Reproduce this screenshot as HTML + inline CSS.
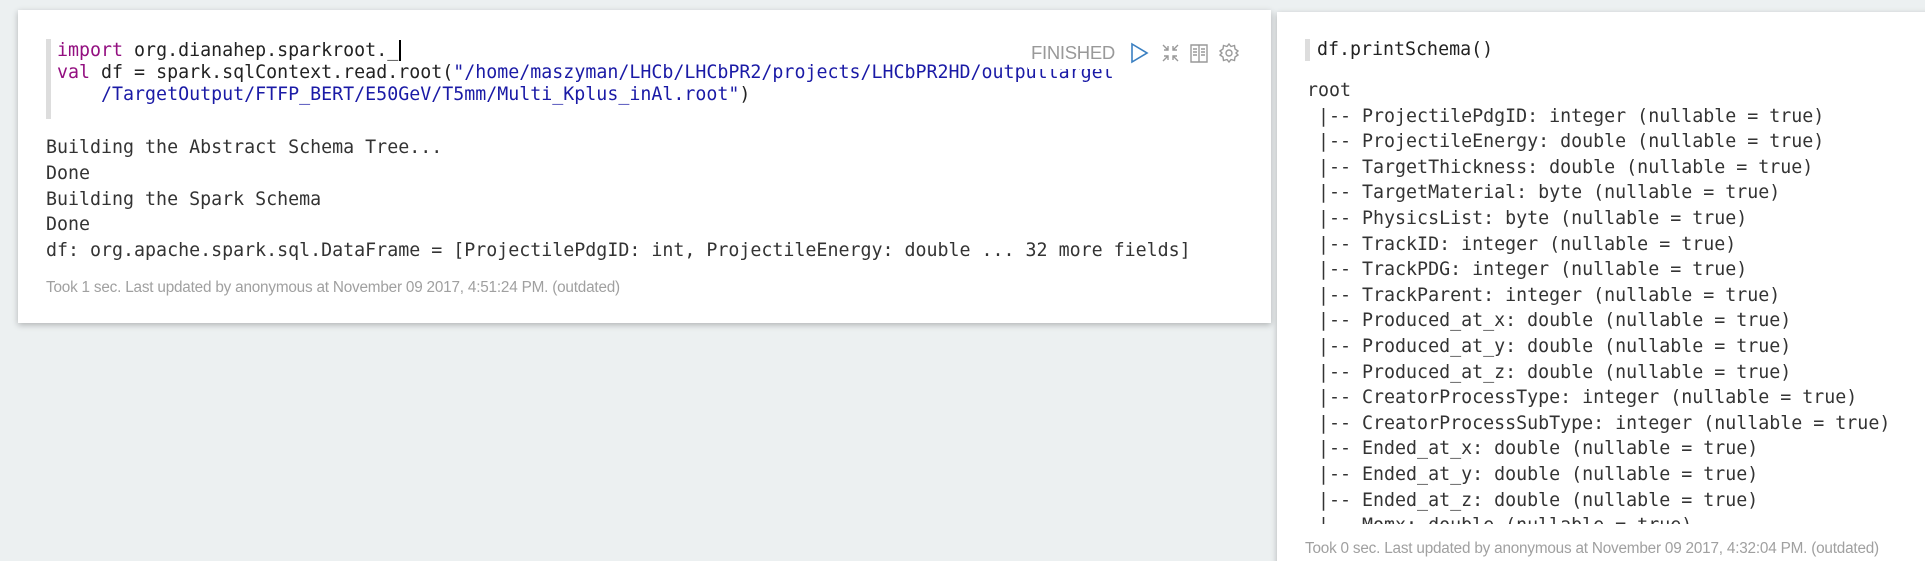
<!DOCTYPE html>
<html><head><meta charset="utf-8"><style>
html,body{margin:0;padding:0;width:1925px;height:561px;overflow:hidden;background:#ecf0f1;position:relative}
.card{position:absolute;background:#fff;box-shadow:0 2px 6px rgba(0,0,0,0.25)}
.mono{font-family:"DejaVu Sans Mono","Liberation Mono",monospace;font-size:18.3px;white-space:pre;color:#333}
.sans{font-family:"Liberation Sans",sans-serif}
.kw{color:#930f80}.str{color:#1a1aa6}
</style></head><body>
<div class="card" style="left:18px;top:10px;width:1253px;height:313px">
  <div style="position:absolute;left:28px;top:29px;width:5px;height:80px;background:#ddd"></div>
  <div class="mono" style="position:absolute;left:39px;top:30px;line-height:22px;color:#222"><span class="kw">import</span> org.dianahep.sparkroot._<span style="border-left:2px solid #000;margin-left:1px"></span>
<span class="kw">val</span> df = spark.sqlContext.read.root(<span class="str">"/home/maszyman/LHCb/LHCbPR2/projects/LHCbPR2HD/outputtarget</span>
    <span class="str">/TargetOutput/FTFP_BERT/E50GeV/T5mm/Multi_Kplus_inAl.root"</span>)</div>
  <div style="position:absolute;left:1010px;top:20px;width:235px;height:39px;background:#fff"></div>
  <div class="sans" style="position:absolute;left:1013px;top:32px;font-size:18.5px;color:#999;letter-spacing:-0.3px">FINISHED</div>
  <svg style="position:absolute;left:1110px;top:30px" width="140" height="26" viewBox="0 0 140 26">
    <path d="M4 4 L19 13 L4 22 Z" fill="none" stroke="#3a7fc1" stroke-width="1.6"/>
    <g stroke="#999" stroke-width="1.4" fill="none">
      <path d="M35 5 L40 10 M40 6 V10 H36 M50 5 L45 10 M45 6 V10 H49 M35 21 L40 16 M40 20 V16 H36 M50 21 L45 16 M45 20 V16 H49"/>
      <path d="M63 5 H79 V22 H63 Z M71 5 V22 M65 9 H69 M65 12 H69 M65 15 H69 M73 9 H77 M73 12 H77 M73 15 H77"/>
      <circle cx="101" cy="13" r="3"/>
      <path d="M101 4 L103 6.5 L106.5 5.5 L107 9 L110 11 L108 13 L110 15 L107 17 L106.5 20.5 L103 19.5 L101 22 L99 19.5 L95.5 20.5 L95 17 L92 15 L94 13 L92 11 L95 9 L95.5 5.5 L99 6.5 Z"/>
    </g>
  </svg>
  <div class="mono" style="position:absolute;left:28px;top:125px;line-height:25.8px">Building the Abstract Schema Tree...
Done
Building the Spark Schema
Done
df: org.apache.spark.sql.DataFrame = [ProjectilePdgID: int, ProjectileEnergy: double ... 32 more fields]</div>
  <div class="sans" style="position:absolute;left:28px;top:269px;font-size:15.3px;color:#a0a0a0;letter-spacing:-0.2px">Took 1 sec. Last updated by anonymous at November 09 2017, 4:51:24 PM. (outdated)</div>
</div>
<div class="card" style="left:1277px;top:12px;width:660px;height:560px">
  <div style="position:absolute;left:28px;top:27px;width:5px;height:22px;background:#ddd"></div>
  <div class="mono" style="position:absolute;left:40px;top:27px;line-height:22px;color:#222">df.printSchema()</div>
  <div style="position:absolute;left:30px;top:66px;width:620px;height:446px;overflow:hidden">
  <div class="mono" style="line-height:25.6px">root
 |-- ProjectilePdgID: integer (nullable = true)
 |-- ProjectileEnergy: double (nullable = true)
 |-- TargetThickness: double (nullable = true)
 |-- TargetMaterial: byte (nullable = true)
 |-- PhysicsList: byte (nullable = true)
 |-- TrackID: integer (nullable = true)
 |-- TrackPDG: integer (nullable = true)
 |-- TrackParent: integer (nullable = true)
 |-- Produced_at_x: double (nullable = true)
 |-- Produced_at_y: double (nullable = true)
 |-- Produced_at_z: double (nullable = true)
 |-- CreatorProcessType: integer (nullable = true)
 |-- CreatorProcessSubType: integer (nullable = true)
 |-- Ended_at_x: double (nullable = true)
 |-- Ended_at_y: double (nullable = true)
 |-- Ended_at_z: double (nullable = true)
 |-- Momx: double (nullable = true)</div></div>
  <div class="sans" style="position:absolute;left:28px;top:528px;font-size:15.3px;color:#a0a0a0;letter-spacing:-0.2px">Took 0 sec. Last updated by anonymous at November 09 2017, 4:32:04 PM. (outdated)</div>
</div>
</body></html>
